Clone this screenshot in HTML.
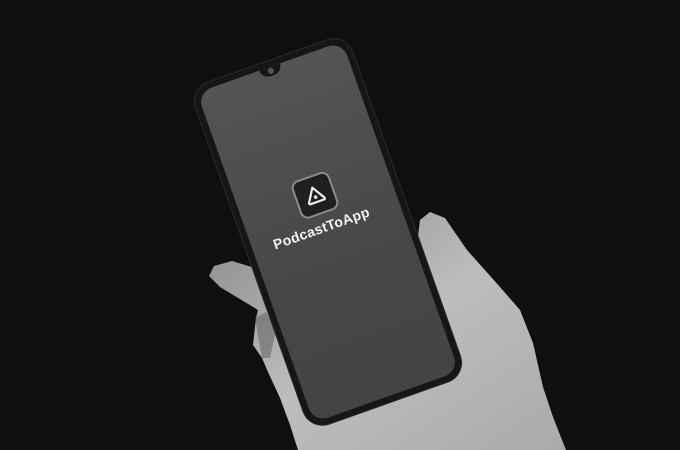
<!DOCTYPE html>
<html><head><meta charset="utf-8"><style>
html,body{margin:0;padding:0;background:#0f0f0f;}
body{width:680px;height:450px;overflow:hidden;position:relative;}
svg.hand{position:absolute;left:0;top:0;}
.phone{position:absolute;left:245px;top:51px;width:166px;height:362px;transform:rotate(-19.5deg);background:#161616;border-radius:20px;box-shadow:0 0 0 1px #2a2a2a;}
.screen{position:absolute;left:6px;top:6px;right:6px;bottom:6px;border-radius:15px;background:linear-gradient(180deg,#545454,#474747 60%,#444);}
.notch{position:absolute;left:50%;top:0;width:22px;height:9px;margin-left:-11px;background:#161616;border-radius:0 0 11px 11px;}
.notch:after{content:"";position:absolute;left:8px;top:1px;width:6px;height:6px;border-radius:50%;background:#555;}
.icon{position:absolute;left:50%;top:116px;width:36px;height:36px;margin-left:-20px;background:#1f1f1f;border:2px solid #8a8a8a;border-radius:8px;}
.txt{position:absolute;left:0;right:0;top:161px;text-align:center;color:#f2f2f2;font:bold 14px "Liberation Sans",sans-serif;letter-spacing:0.3px;margin-left:-10px;}
</style></head><body>
<svg class="hand" width="680" height="450">
<defs><linearGradient id="g" x1="0" y1="0" x2="1" y2="1"><stop offset="0" stop-color="#8a8a8a"/><stop offset=".5" stop-color="#bdbdbd"/><stop offset="1" stop-color="#aaaaaa"/></linearGradient></defs>
<path fill="url(#g)" d="M255 268 L232 261 L214 266 L209 276 L220 287 L258 310 L256 318 L253 345 L262 358 L268 372 L280 398 L290 425 L298 450 L566 450 L553 417 L543 387 L533 343 L520 310 L500 287 L467 250 L445 218 L430 212 L420 220 L410 300 Z"/>
<path fill="#5a5a5a" opacity=".5" d="M255 318 L266 312 L276 330 L270 358 L262 358 Z"/>
</svg>
<div class="phone"><div class="screen">
<div class="notch"></div>
<div class="icon"><svg width="36" height="36" viewBox="0 0 36 36"><path d="M18 10 L26 23 Q27 25 25 25 L11 25 Q9 25 10 23 Z" fill="none" stroke="#eee" stroke-width="2.2" stroke-linejoin="round"/><circle cx="18" cy="20" r="1.8" fill="#eee"/></svg></div>
<div class="txt">PodcastToApp</div>
</div></div>
</body></html>
